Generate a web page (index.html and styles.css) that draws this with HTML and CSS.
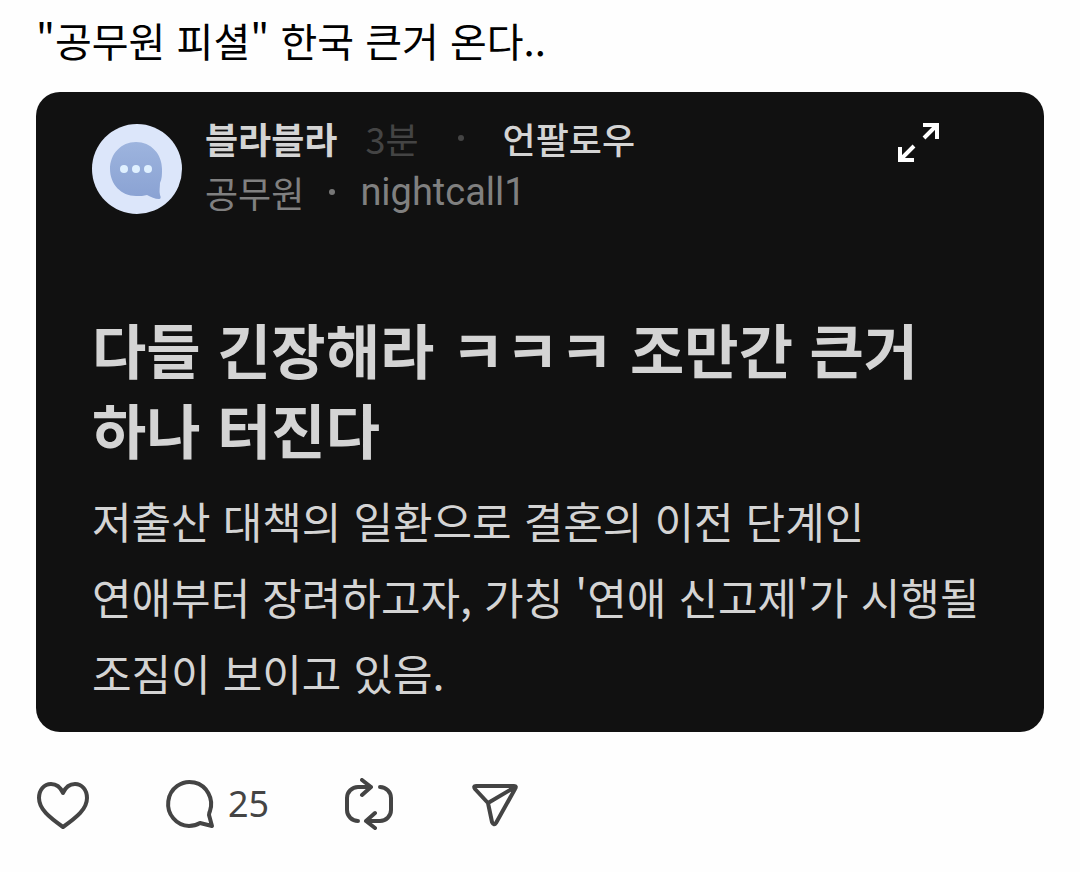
FILE: index.html
```html
<!DOCTYPE html>
<html lang="ko">
<head>
    <meta charset="UTF-8">
    <meta name="viewport" content="width=device-width, initial-scale=1.0">
    <title>"공무원 피셜" 한국 큰거 온다..</title>
    <link rel="stylesheet" href="styles.css">
</head>
<body>
    <main class="post">
        <h1 class="post-title">"공무원 피셜" 한국 큰거 온다..</h1>

        <article class="card">
            <header class="card-header">
                <svg class="avatar" viewBox="0 0 90 90" aria-hidden="true">
                    <defs>
                        <linearGradient id="bubble" x1="0" y1="0" x2="0" y2="1">
                            <stop offset="0" stop-color="#9db4de"/>
                            <stop offset="1" stop-color="#8aa2d3"/>
                        </linearGradient>
                    </defs>
                    <circle cx="45" cy="45" r="45" fill="#dce6fa"/>
                    <path d="M44 18C29 18 18 30 18 45s11 27 26 27c4 0 8 0 11-1 4 2 8 4 12 4 2 0 2-2 1-4-1-4 0-8 0-12 2-4 2-9 2-14 0-15-11-27-26-27z" fill="url(#bubble)"/>
                    <circle cx="32" cy="45" r="4" fill="#dff0ff"/>
                    <circle cx="44" cy="45" r="4" fill="#dff0ff"/>
                    <circle cx="56" cy="45" r="4" fill="#dff0ff"/>
                </svg>
                <div class="meta">
                    <div class="meta-row">
                        <span class="channel">블라블라</span>
                        <span class="time">3분</span>
                        <span class="dot dot-wide"></span>
                        <button class="follow" type="button">언팔로우</button>
                    </div>
                    <div class="meta-row author">
                        <span>공무원</span>
                        <span class="dot"></span>
                        <span class="nick">nightcall1</span>
                    </div>
                </div>
                <button class="expand" type="button" aria-label="확대">
                    <svg width="44" height="44" viewBox="0 0 44 44" aria-hidden="true">
                        <path d="M26 4h14v14M39 5L27 17M3 26v13h14M4 38l13-13" fill="none" stroke="#fff" stroke-width="4"/>
                    </svg>
                </button>
            </header>

            <h2 class="card-title">다들 긴장해라 ㅋㅋㅋ 조만간 큰거 하나 터진다</h2>
            <p class="card-text">저출산 대책의 일환으로 결혼의 이전 단계인 연애부터 장려하고자, 가칭 '연애 신고제'가 시행될 조짐이 보이고 있음.</p>
        </article>

        <footer class="actions">
            <button class="action" type="button" aria-label="좋아요">
                <svg width="54" height="54" viewBox="0 0 54 54" aria-hidden="true">
                    <path d="M27 15C24 8 20 6 15 6 8 6 3 12 3 20c0 11 10 19 24 29 14-10 24-18 24-29 0-8-5-14-12-14-5 0-9 2-12 9z"/>
                </svg>
            </button>
            <button class="action" type="button" aria-label="댓글 25">
                <svg width="54" height="54" viewBox="0 0 54 54" aria-hidden="true">
                    <path d="M36 45Q31 48 25 48A21.5 22 0 1 1 46 33Q45 35 45 37L48 48z"/>
                </svg>
                <span class="count">25</span>
            </button>
            <button class="action" type="button" aria-label="리포스트">
                <svg width="54" height="54" viewBox="0 0 54 54" aria-hidden="true">
                    <path d="M28 9H15A11 11 0 0 0 4 20V32A11 11 0 0 0 15 43M19 2L28 9L19 17M37 9A11 11 0 0 1 48 20V32A11 11 0 0 1 37 43H23M32 35L23 43L32 50"/>
                </svg>
            </button>
            <button class="action" type="button" aria-label="공유">
                <svg width="54" height="54" viewBox="0 0 54 54" aria-hidden="true">
                    <path d="M5 8H43Q46 8 44 11L25 45Q23 48 21 44L17 25L4 11Q2 8 5 8zM17 25L44 9"/>
                </svg>
            </button>
        </footer>
    </main>
</body>
</html>
```

FILE: styles.css
```css
* {
    margin: 0;
    padding: 0;
    box-sizing: border-box;
}

body {
    background: #fefefe;
    color: #000;
    font-family: "Noto Sans CJK KR", sans-serif;
    word-break: keep-all;
}

button {
    background: none;
    border: none;
    color: inherit;
    font: inherit;
    cursor: pointer;
}

.post {
    padding: 10px 36px;
}

.post-title {
    font-size: 40px;
    line-height: 60px;
    font-weight: 400;
}

.card {
    margin-top: 22px;
    padding: 20px 56px 22px;
    background: #111;
    border-radius: 24px;
    color: #d4d4d4;
}

.card-header {
    display: flex;
    align-items: flex-start;
}

.avatar {
    width: 90px;
    height: 90px;
    margin-top: 12px;
    flex-shrink: 0;
}

.meta {
    flex: 1;
    margin-left: 23px;
    font-size: 36px;
    line-height: 52px;
}

.meta-row {
    display: flex;
    align-items: center;
}

.channel {
    font-weight: 700;
}

.time {
    margin-left: 28px;
    color: #444;
}

.dot {
    width: 6px;
    height: 6px;
    margin: 0 25px;
    border-radius: 50%;
    background: #777;
}

.dot-wide {
    margin: 0 39px;
    background: #444;
}

.follow {
    font-weight: 500;
}

.author {
    padding-top: 2px;
    color: #808080;
}

.nick {
    font-family: Roboto, sans-serif;
    font-size: 38px;
}

.expand {
    display: flex;
    justify-content: center;
    width: 88px;
    margin-right: 25px;
    padding: 9px 0;
}

.card-title {
    margin-top: 91px;
    font-size: 59px;
    line-height: 80px;
    font-weight: 700;
}

.card-text {
    margin-top: 13px;
    font-size: 43px;
    line-height: 76px;
}

.actions {
    display: flex;
    gap: 74px;
    margin-top: 46px;
}

.action {
    display: flex;
    align-items: center;
    gap: 10px;
}

.action svg {
    fill: none;
    stroke: #444;
    stroke-width: 4;
    stroke-linecap: round;
    stroke-linejoin: round;
}

.count {
    color: #444;
    font-family: "Noto Sans", sans-serif;
    font-size: 36px;
    line-height: 50px;
    padding-bottom: 2px;
}
```
